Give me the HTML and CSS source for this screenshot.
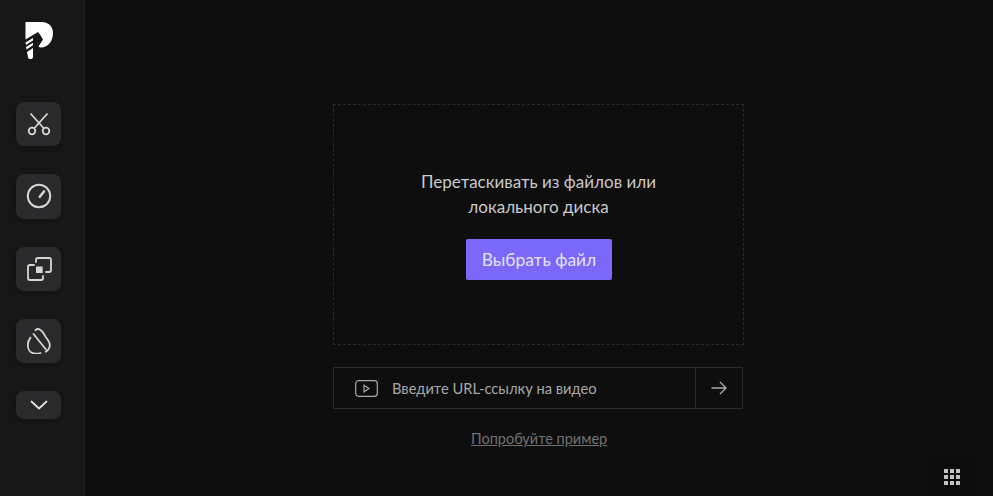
FILE: index.html
```html
<!DOCTYPE html>
<html lang="ru">
<head>
<meta charset="utf-8">
<title>Видео</title>
<link rel="stylesheet" href="styles.css">
</head>
<body>
<div class="app">
  <aside class="sidebar">
    <svg class="logo" width="28" height="38" viewBox="0 0 28 38">
      <path fill="#fff" d="M0.500 1H17C24 1 28 6 28 12C28 20 23 27 15 26.500L13.500 25.500L18 18.500L15 13.500L13 11L0.500 18.500Z"/>
      <path fill="#fff" d="M0.500 21.500L8 17V19.500L1 24Z M1 26L8 21.800V24.300L1.500 28.500Z M2 31L8 27V36C8 37.500 7 38 5 38C3.500 38 3 37 3 36Z"/>
    </svg>
    <nav class="tools">
      <button class="tool">
        <svg width="26" height="26" viewBox="0 0 26 26" fill="none" stroke="#d6d6d6" stroke-width="1.800">
          <circle cx="6" cy="20" r="3.300"/><circle cx="20" cy="20" r="3.300"/>
          <path d="M8 17.500L21.500 2.500M18 17.500L4.500 2.500"/>
        </svg>
      </button>
      <button class="tool">
        <svg width="26" height="26" viewBox="0 0 26 26" fill="none" stroke="#d6d6d6" stroke-width="2">
          <circle cx="13" cy="13" r="11.200"/>
          <path d="M13.800 13.800L18 8.500" stroke-width="2.600" stroke-linecap="round"/>
        </svg>
      </button>
      <button class="tool">
        <svg width="26" height="26" viewBox="0 0 26 26" fill="none" stroke="#d6d6d6" stroke-width="1.800" stroke-linecap="round">
          <path d="M10 6V4C10 2.800 10.800 2 12 2H23C24.200 2 25 2.800 25 4V14C25 15.200 24.200 16 23 16H20"/>
          <path d="M8 9H4C2.800 9 2 9.800 2 11V22C2 23.200 2.800 24 4 24H15C16.200 24 17 23.200 17 22V20"/>
          <rect x="10" y="10.500" width="6.700" height="6.500" fill="#d6d6d6" stroke="none"/>
        </svg>
      </button>
      <button class="tool">
        <svg width="26" height="26" viewBox="0 0 26 26" fill="none" stroke="#d6d6d6" stroke-width="1.800" stroke-linecap="round">
          <path d="M7.500 6L20 21.500"/>
          <path d="M9.500 2.200C10.500 1.200 11.800 0.800 13 1.200C15.500 2 17.800 5.500 19.500 8.700C21.500 11.500 23.800 14 23.800 17C23.800 19.500 22 22.500 19.800 23.800"/>
          <path d="M4.500 9.700C3 11.500 1.800 14 1.800 17C1.800 21 4 24.500 7 25.200C9.500 25.700 12.500 25.500 14.500 25"/>
        </svg>
      </button>
      <button class="tool tool-short">
        <svg width="18" height="10" viewBox="0 0 18 10" fill="none" stroke="#e0e0e0" stroke-width="1.800" stroke-linecap="round" stroke-linejoin="round">
          <path d="M1.500 1.500L9 8.500L16.500 1.500"/>
        </svg>
      </button>
    </nav>
  </aside>
  <main class="main">
    <section class="drop">
      <p class="drop-text">Перетаскивать из файлов или<br>локального диска</p>
      <button class="choose">Выбрать файл</button>
    </section>
    <form class="url">
      <div class="url-field">
        <svg width="23" height="17" viewBox="0 0 23 17" fill="none" stroke="#a8a8a8" stroke-width="1.200">
          <rect x="0.700" y="0.700" width="21.600" height="15.600" rx="3"/>
          <path d="M9 5.200L14 8.500L9 11.800Z"/>
        </svg>
        <span class="url-label">Введите URL-ссылку на видео</span>
      </div>
      <div class="url-go">
        <svg width="16" height="14" viewBox="0 0 16 14" fill="none" stroke="#a8a8a8" stroke-width="1.400">
          <path d="M0.500 7H15M9 1L15 7L9 13"/>
        </svg>
      </div>
    </form>
    <a class="sample" href="#">Попробуйте пример</a>
  </main>
  <button class="apps">
    <span></span><span></span><span></span><span></span><span></span><span></span><span></span><span></span><span></span>
  </button>
</div>
</body>
</html>
```
FILE: styles.css
```css
* { box-sizing: border-box; }
html, body { margin: 0; height: 100%; }
body {
  background: #0e0e0f;
  font-family: "Lato", "Open Sans", "Noto Sans", sans-serif;
  overflow: hidden;
}
.app { position: relative; display: flex; width: 993px; height: 496px; }
.sidebar {
  width: 85px;
  flex: none;
  background: #171717;
  border-right: 1px solid #242424;
  padding: 21px 0 0 16px;
}
.logo { display: block; margin-left: 9px; }
.tools {
  display: flex;
  flex-direction: column;
  gap: 28px;
  margin-top: 43px;
}
.tool {
  width: 45px;
  height: 44.250px;
  padding: 0;
  border: none;
  border-radius: 8px;
  background: #2a2a2c;
  box-shadow: 0 2px 8px rgba(0, 0, 0, .25);
  display: flex;
  align-items: center;
  justify-content: center;
}
.tool-short { height: 28px; }
.main {
  flex: 1;
  padding: 104px 0 0 248px;
  display: flex;
  flex-direction: column;
  align-items: flex-start;
}
.drop {
  width: 411px;
  height: 241px;
  border: 1px dashed #2a2a2a;
  display: flex;
  flex-direction: column;
  align-items: center;
  padding-top: 64px;
}
.drop-text {
  margin: 0;
  color: #c9c9c9;
  font-size: 17px;
  line-height: 25px;
  text-align: center;
}
.choose {
  margin: 20px 0 0 1px;
  width: 146px;
  height: 41px;
  border: none;
  border-radius: 2px;
  background: #7a68f8;
  color: #e6e2ff;
  font: inherit;
  font-size: 17.400px;
}
.url {
  margin: 22px 0 0;
  width: 410px;
  height: 42px;
  border: 1px solid #2b2b2b;
  display: flex;
}
.url-field {
  flex: 1;
  display: flex;
  align-items: center;
  padding-left: 21px;
  gap: 14px;
}
.url-label { color: #a8a8a8; font-size: 14.700px; }
.url-go {
  width: 47px;
  border-left: 1px solid #2b2b2b;
  display: flex;
  align-items: center;
  justify-content: center;
}
.sample {
  align-self: flex-start;
  margin: 21px 0 0 138px;
  color: #717171;
  font-size: 14.500px;
  line-height: 18px;
  text-decoration: underline;
}
.apps {
  position: absolute;
  right: 16px;
  bottom: 0;
  width: 50px;
  height: 39px;
  padding: 0;
  border: none;
  background: #0b0b0b;
  display: grid;
  grid-template-columns: repeat(3, 4px);
  grid-auto-rows: 4px;
  gap: 2px;
  justify-content: center;
  align-content: center;
}
.apps span { background: #c2c2c2; }
```
